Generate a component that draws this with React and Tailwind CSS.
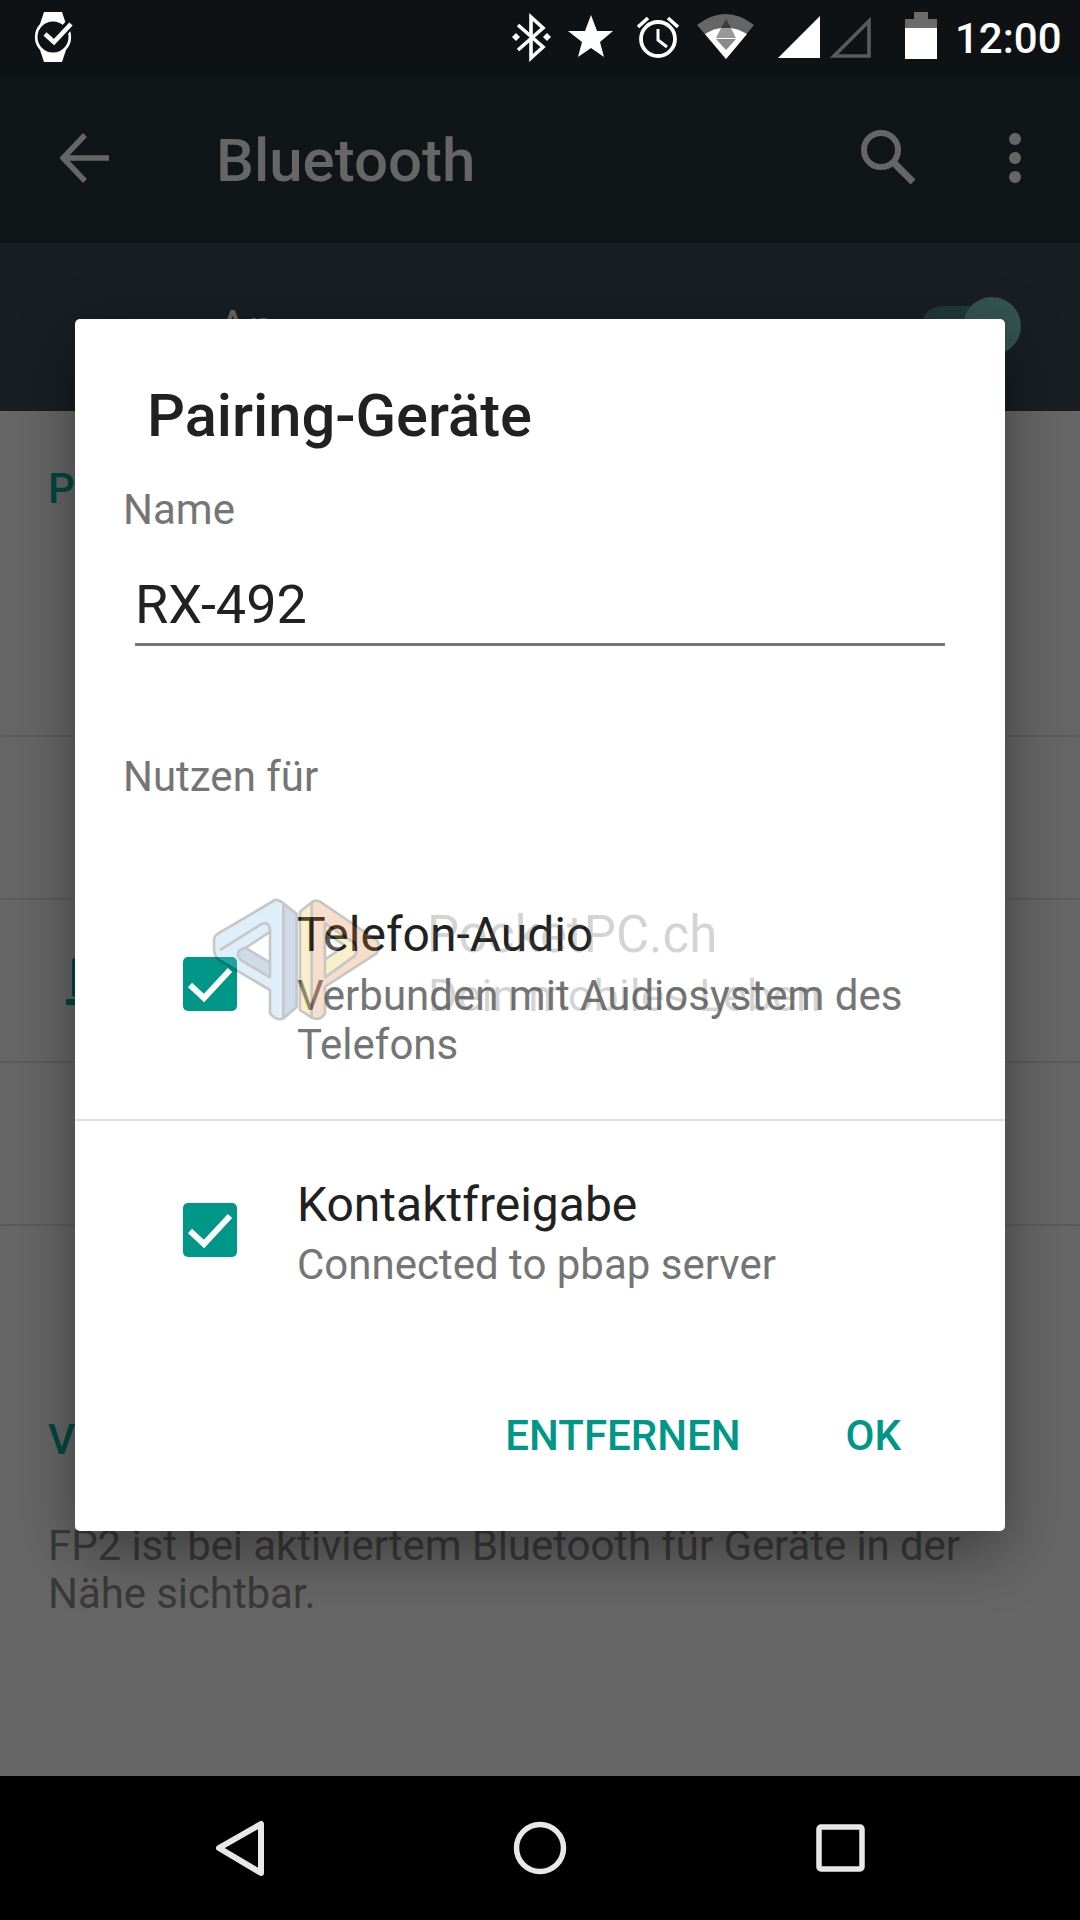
const font = { fontFamily: "Roboto, 'Liberation Sans', sans-serif" };

function Check() {
  return (
    <div className="w-[54px] h-[54px] rounded-[5px] bg-[#009688] flex items-center justify-center shrink-0">
      <svg width="54" height="54" viewBox="0 0 54 54" fill="none">
        <path d="M7 28 L21 41 L47 13" stroke="#fff" strokeWidth="6" />
      </svg>
    </div>
  );
}

function StatusIcons() {
  return (
    <svg width="1080" height="75" viewBox="0 0 1080 75" className="absolute left-0 top-0">
      {/* watch */}
      <path d="M44 12 H62 L66 24 A19 19 0 0 1 66 50 L62 62 H44 L40 50 A19 19 0 0 1 40 24 Z" fill="#fff" />
      <circle cx="53" cy="37" r="15.5" fill="#0e1214" />
      <path d="M45 33 L54 42 L71 23" stroke="#0e1214" strokeWidth="10" fill="none" />
      <path d="M45 34 L54 42 L71 24" stroke="#fff" strokeWidth="4.5" fill="none" />
      {/* bluetooth */}
      <path d="M518 25 L543 47 L531 58 V17 L543 28 L518 50" stroke="#fff" strokeWidth="3.6" fill="none" />
      <path d="M512 37 L516 33 L520 37 L516 41 Z M543 37 L547 33 L551 37 L547 41 Z" fill="#fff" />
      {/* star */}
      <path d="M591 15 L597 31 L613 31 L600 42 L604 57 L591 48 L578 57 L582 42 L568 31 L585 31 Z" fill="#fff" />
      {/* alarm */}
      <circle cx="658" cy="39" r="17" stroke="#fff" strokeWidth="3.8" fill="none" />
      <path d="M658 29 V40 L667 47" stroke="#fff" strokeWidth="3" fill="none" />
      <path d="M638 27 L648 18 M678 27 L668 18" stroke="#fff" strokeWidth="3.6" />
      {/* wifi */}
      <path d="M697 25 Q725.5 3 754 25 L726 59 Z" fill="#666" />
      <path d="M705 34 Q725.5 21 747 34 L726 59 Z" fill="#fff" />
      <path d="M726 19 L731 28 H721 Z" fill="#3c3c3c" />
      <path d="M721 28 H731 L736 38 H716 Z" fill="#999" />
      <path d="M716 39 H736 L726 50 Z" fill="#8a8a8a" />
      {/* signal */}
      <path d="M778 58 L820 16 V58 Z" fill="#fff" />
      <path d="M834 56 L869 21 V56 Z" stroke="#5a5a5a" strokeWidth="3.6" fill="none" />
      {/* battery */}
      <path d="M905 19 H914 V12 H928 V19 H937 V28 H905 Z" fill="#6b6b6b" />
      <rect x="905" y="28" width="32" height="31" fill="#fff" />
    </svg>
  );
}

function Watermark() {
  return (
    <div className="absolute left-0 top-0 w-[1080px] h-[1920px] pointer-events-none">
      <svg width="200" height="140" viewBox="0 0 600 420" className="absolute left-[200px] top-[890px] opacity-25">
        <g stroke="#232323" strokeWidth="8" strokeLinejoin="round">
          <path d="M225 30 Q235 28 250 40 L290 72 V350 L250 385 Q235 392 220 380 L210 370 V300 L60 212 Q42 200 42 175 V150 Q42 138 55 130 Z" fill="#7fc3eb" />
          <path d="M250 42 L290 72 V350 L250 385 Z" fill="#4373b3" />
          <path d="M60 180 L185 102 Q210 92 210 125" fill="none" />
          <path d="M210 125 V220 L135 175 Z" fill="#ffffff" />
          <path d="M135 173 L210 218 V262 L125 212 Q105 195 120 180 Z" fill="#4373b3" />
          <path d="M335 37 Q345 28 360 35 L530 150 Q545 170 530 190 L375 290 V370 Q360 395 335 383 Z" fill="#df7f33" />
          <path d="M300 65 L335 37 V383 L300 360 Z" fill="#efc333" />
          <path d="M375 100 L465 160 Q475 180 465 197 L375 262 Z" fill="#efc333" />
          <path d="M375 125 L435 168 L375 208 Z" fill="#ffffff" />
        </g>
      </svg>
      <div className="absolute left-[427px] top-[904px] text-[51px] leading-[62px] text-[#53535340] whitespace-nowrap" style={font}>PocketPC.ch</div>
      <div className="absolute left-[428px] top-[971px] text-[45px] leading-[50px] text-[#53535340] whitespace-nowrap" style={font}>Dein mobiles Leben</div>
    </div>
  );
}

export default function App() {
  return (
    <div className="relative w-[1080px] h-[1920px] overflow-hidden bg-[#666666] flex flex-col" style={font}>
      {/* status bar */}
      <div className="relative h-[75px] shrink-0 bg-[#0e1214]">
        <StatusIcons />
        <div className="absolute left-[955px] top-[14px] text-[42px] leading-[50px] font-medium text-white">12:00</div>
      </div>

      {/* toolbar */}
      <div className="h-[168px] shrink-0 bg-[#101518] flex items-center pl-[60px] pr-[59px]">
        <svg width="50" height="50" viewBox="0 0 50 50" fill="none" className="shrink-0 -mt-[3px]">
          <path d="M49 25 H4 M25 2 L3 25 L25 48" stroke="#666" strokeWidth="5.5" />
        </svg>
        <div className="ml-[106px] text-[60px] leading-[72px] font-medium text-[#666666] mt-[3px]">Bluetooth</div>
        <svg width="56" height="54" viewBox="0 0 56 54" fill="none" className="ml-auto shrink-0 -mt-[4px]">
          <circle cx="21" cy="20" r="17" stroke="#666" strokeWidth="6" />
          <path d="M33 32 L53 52" stroke="#666" strokeWidth="7" />
        </svg>
        <div className="ml-[93px] flex flex-col gap-[7px] shrink-0 -mt-[2px]">
          <div className="w-[12px] h-[12px] rounded-full bg-[#666]" />
          <div className="w-[12px] h-[12px] rounded-full bg-[#666]" />
          <div className="w-[12px] h-[12px] rounded-full bg-[#666]" />
        </div>
      </div>

      {/* switch panel */}
      <div className="relative h-[168px] shrink-0 bg-[#181e22] pl-[217px] pt-[55px]">
        <div className="text-[48px] leading-[60px] text-[#666666]">An</div>
        <div className="absolute left-[921px] top-[63px] w-[90px] h-[42px] rounded-full bg-[#1f3a38]" />
        <div className="absolute left-[963px] top-[54px] w-[58px] h-[58px] rounded-full bg-[#33544f]" />
      </div>

      {/* dimmed list */}
      <div className="flex-1 bg-[#666666] flex flex-col">
        <div className="h-[326px] border-b-[2px] border-[#5b5b5b] pl-[48px] pt-[53px]">
          <div className="text-[42px] leading-[50px] font-medium text-[#00493f]">P</div>
        </div>
        <div className="h-[163px] border-b-[2px] border-[#5b5b5b]" />
        <div className="relative h-[163px] border-b-[2px] border-[#5b5b5b]">
          <div className="absolute left-[72px] top-[58px] w-[4px] h-[39px] rounded-l-[3px] bg-[#00463c]" />
          <div className="absolute left-[66px] top-[99px] w-[10px] h-[6px] bg-[#00463c]" />
        </div>
        <div className="h-[163px] border-b-[2px] border-[#5b5b5b]" />
        <div className="pl-[48px] pt-[189px]">
          <div className="text-[42px] leading-[50px] font-medium text-[#00493f]">V</div>
        </div>
        <div className="pl-[48px] pr-[90px] pt-[57px] text-[42px] leading-[48px] tracking-[-0.08px] text-[#3a3a3a]">
          FP2 ist bei aktiviertem Bluetooth für Geräte in der Nähe sichtbar.
        </div>
      </div>

      {/* nav */}
      <div className="h-[144px] shrink-0 bg-black flex items-center relative">
        <svg width="1080" height="144" viewBox="0 0 1080 144" fill="none" className="absolute left-0 top-0">
          <path d="M261 48 V97 L219 72 Z" stroke="#e8e8e8" strokeWidth="6" strokeLinejoin="round" />
          <circle cx="540" cy="72" r="23.5" stroke="#e8e8e8" strokeWidth="5.5" />
          <rect x="819" y="51" width="43" height="42" rx="2" stroke="#e8e8e8" strokeWidth="5.5" />
        </svg>
      </div>

      {/* dialog */}
      <div className="absolute left-[75px] top-[319px] w-[930px] h-[1212px] bg-white rounded-[5px] shadow-[0_20px_60px_rgba(0,0,0,0.4)] flex flex-col">
        <div className="pl-[72px] pt-[64px] text-[59.6px] leading-[66px] font-medium text-[#212121]">Pairing-Geräte</div>
        <div className="pl-[48px] pt-[36px] text-[42px] leading-[50px] text-[#757575]">Name</div>
        <div className="mx-[60px] mt-[32px] h-[79px] border-b-[3px] border-[#757575] text-[54px] leading-[76px] text-[#212121]">RX-492</div>
        <div className="pl-[48px] pt-[106px] text-[42px] leading-[50px] text-[#757575]">Nutzen für</div>

        <div className="mt-[105px] h-[212px] box-content border-b-[2px] border-[#e0e0e0] flex pl-[108px]">
          <div className="pt-[50px]"><Check /></div>
          <div className="ml-[60px] pr-[80px]">
            <div className="text-[48px] leading-[56px] text-[#212121]">Telefon-Audio</div>
            <div className="mt-[8px] text-[42px] leading-[49px] text-[#757575]">Verbunden mit Audiosystem des Telefons</div>
          </div>
        </div>

        <div className="flex pl-[108px] pt-[82px]">
          <Check />
          <div className="ml-[60px] -mt-[26px]">
            <div className="text-[48px] leading-[56px] text-[#212121]">Kontaktfreigabe</div>
            <div className="mt-[7px] text-[42px] leading-[49px] text-[#757575]">Connected to pbap server</div>
          </div>
        </div>

        <div className="mt-auto mb-[70px] flex justify-end pr-[104px] gap-[105px] text-[42px] leading-[50px] font-medium text-[#009688]">
          <div>ENTFERNEN</div>
          <div>OK</div>
        </div>
      </div>

      <Watermark />
    </div>
  );
}
